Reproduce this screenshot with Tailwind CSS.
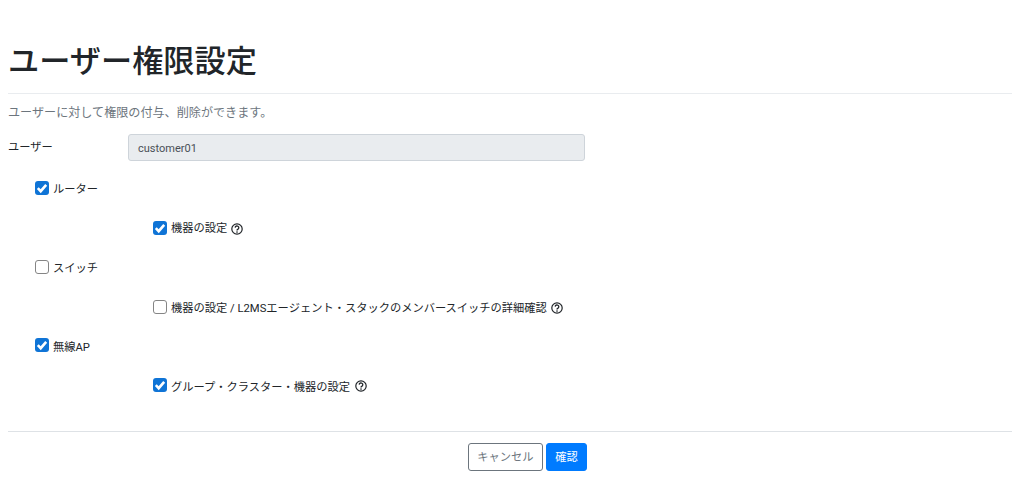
<!DOCTYPE html>
<html lang="ja">
<head>
    <title>ユーザー権限設定</title>
    <meta charset="utf-8">
    <script src="https://cdn.jsdelivr.net/npm/@tailwindcss/browser@4"></script>
</head>
<body class="bg-white text-[#212529] text-[11.25px] font-['Roboto','Noto_Sans_CJK_JP',sans-serif]">
    <div class="pl-2 pt-[38px]">
        <!-- Header -->
        <h1 class="text-[31.2px] leading-[48px] font-medium pb-[7px] border-b border-[#e9ecef]">ユーザー権限設定</h1>
        <p class="text-[#6c757d] text-[12.1px] leading-[18px] mt-[10px]">ユーザーに対して権限の付与、削除ができます。</p>

        <!-- User -->
        <div class="flex items-center mt-[12px] w-[577px]">
            <label class="w-[120px] pt-[2px]">ユーザー</label>
            <div class="flex-1 h-[27px] leading-[27px] px-[9px] bg-[#e9ecef] border border-[#ced4da] rounded-[3px] text-[#495057] text-[11px]">customer01</div>
        </div>

        <!-- Permissions -->
        <div class="flex items-center gap-[4px] pl-[27px] mt-[19px] h-[18px]">
            <svg class="w-[14px] h-[14px] mb-[2px]" viewBox="0 0 14 14"><rect width="14" height="14" rx="3" fill="#0f74d6"/><path d="M2.8 7.2 L5.7 10.2 L11.2 3.8" fill="none" stroke="#fff" stroke-width="2.6"/></svg>
            <span class="pt-[2px]">ルーター</span>
        </div>
        <div class="flex items-center gap-[4px] pl-[145px] mt-[22px] h-[18px]">
            <svg class="w-[14px] h-[14px] mb-[2px]" viewBox="0 0 14 14"><rect width="14" height="14" rx="3" fill="#0f74d6"/><path d="M2.8 7.2 L5.7 10.2 L11.2 3.8" fill="none" stroke="#fff" stroke-width="2.6"/></svg>
            <span>機器の設定</span>
            <svg class="w-[12px] h-[12px]" viewBox="0 0 12 12"><circle cx="6" cy="6" r="5.2" fill="none" stroke="#212529" stroke-width="1.2"/><path d="M4.2 4.6a1.8 1.7 0 1 1 2.8 1.5c-.7.4-1 .7-1 1.4" fill="none" stroke="#212529" stroke-width="1.3"/><circle cx="6" cy="9.1" r=".8" fill="#212529"/></svg>
        </div>
        <div class="flex items-center gap-[4px] pl-[27px] mt-[21px] h-[18px]">
            <span class="block w-[14px] h-[14px] mb-[2px] rounded-[3px] border border-[#858585] bg-white"></span>
            <span class="pt-[2px]">スイッチ</span>
        </div>
        <div class="flex items-center gap-[4px] pl-[145px] mt-[22px] h-[18px]">
            <span class="block w-[14px] h-[14px] mb-[2px] rounded-[3px] border border-[#858585] bg-white"></span>
            <span class="pt-[2px]">機器の設定 / L2MSエージェント・スタックのメンバースイッチの詳細確認</span>
            <svg class="w-[12px] h-[12px]" viewBox="0 0 12 12"><circle cx="6" cy="6" r="5.2" fill="none" stroke="#212529" stroke-width="1.2"/><path d="M4.2 4.6a1.8 1.7 0 1 1 2.8 1.5c-.7.4-1 .7-1 1.4" fill="none" stroke="#212529" stroke-width="1.3"/><circle cx="6" cy="9.1" r=".8" fill="#212529"/></svg>
        </div>
        <div class="flex items-center gap-[4px] pl-[27px] mt-[20px] h-[18px]">
            <svg class="w-[14px] h-[14px] mb-[2px]" viewBox="0 0 14 14"><rect width="14" height="14" rx="3" fill="#0f74d6"/><path d="M2.8 7.2 L5.7 10.2 L11.2 3.8" fill="none" stroke="#fff" stroke-width="2.6"/></svg>
            <span class="pt-[4px]">無線AP</span>
        </div>
        <div class="flex items-center gap-[4px] pl-[145px] mt-[22px] h-[18px]">
            <svg class="w-[14px] h-[14px] mb-[2px]" viewBox="0 0 14 14"><rect width="14" height="14" rx="3" fill="#0f74d6"/><path d="M2.8 7.2 L5.7 10.2 L11.2 3.8" fill="none" stroke="#fff" stroke-width="2.6"/></svg>
            <span class="pt-[4px]">グループ・クラスター・機器の設定</span>
            <svg class="w-[12px] h-[12px] ml-[1px]" viewBox="0 0 12 12"><circle cx="6" cy="6" r="5.2" fill="none" stroke="#212529" stroke-width="1.2"/><path d="M4.2 4.6a1.8 1.7 0 1 1 2.8 1.5c-.7.4-1 .7-1 1.4" fill="none" stroke="#212529" stroke-width="1.3"/><circle cx="6" cy="9.1" r=".8" fill="#212529"/></svg>
        </div>

        <!-- Footer -->
        <div class="mt-[36px] border-t border-[#dee2e6] pt-[11px] pl-[35px] flex justify-center gap-[3px]">
            <button class="w-[75px] h-[28px] pt-[2px] border border-[#6c757d] rounded-[3px] text-[#6c757d] bg-white">キャンセル</button>
            <button class="w-[41px] h-[28px] pt-[2px] border border-[#007bff] rounded-[3px] text-white bg-[#007bff]">確認</button>
        </div>
    </div>
</body>
</html>
